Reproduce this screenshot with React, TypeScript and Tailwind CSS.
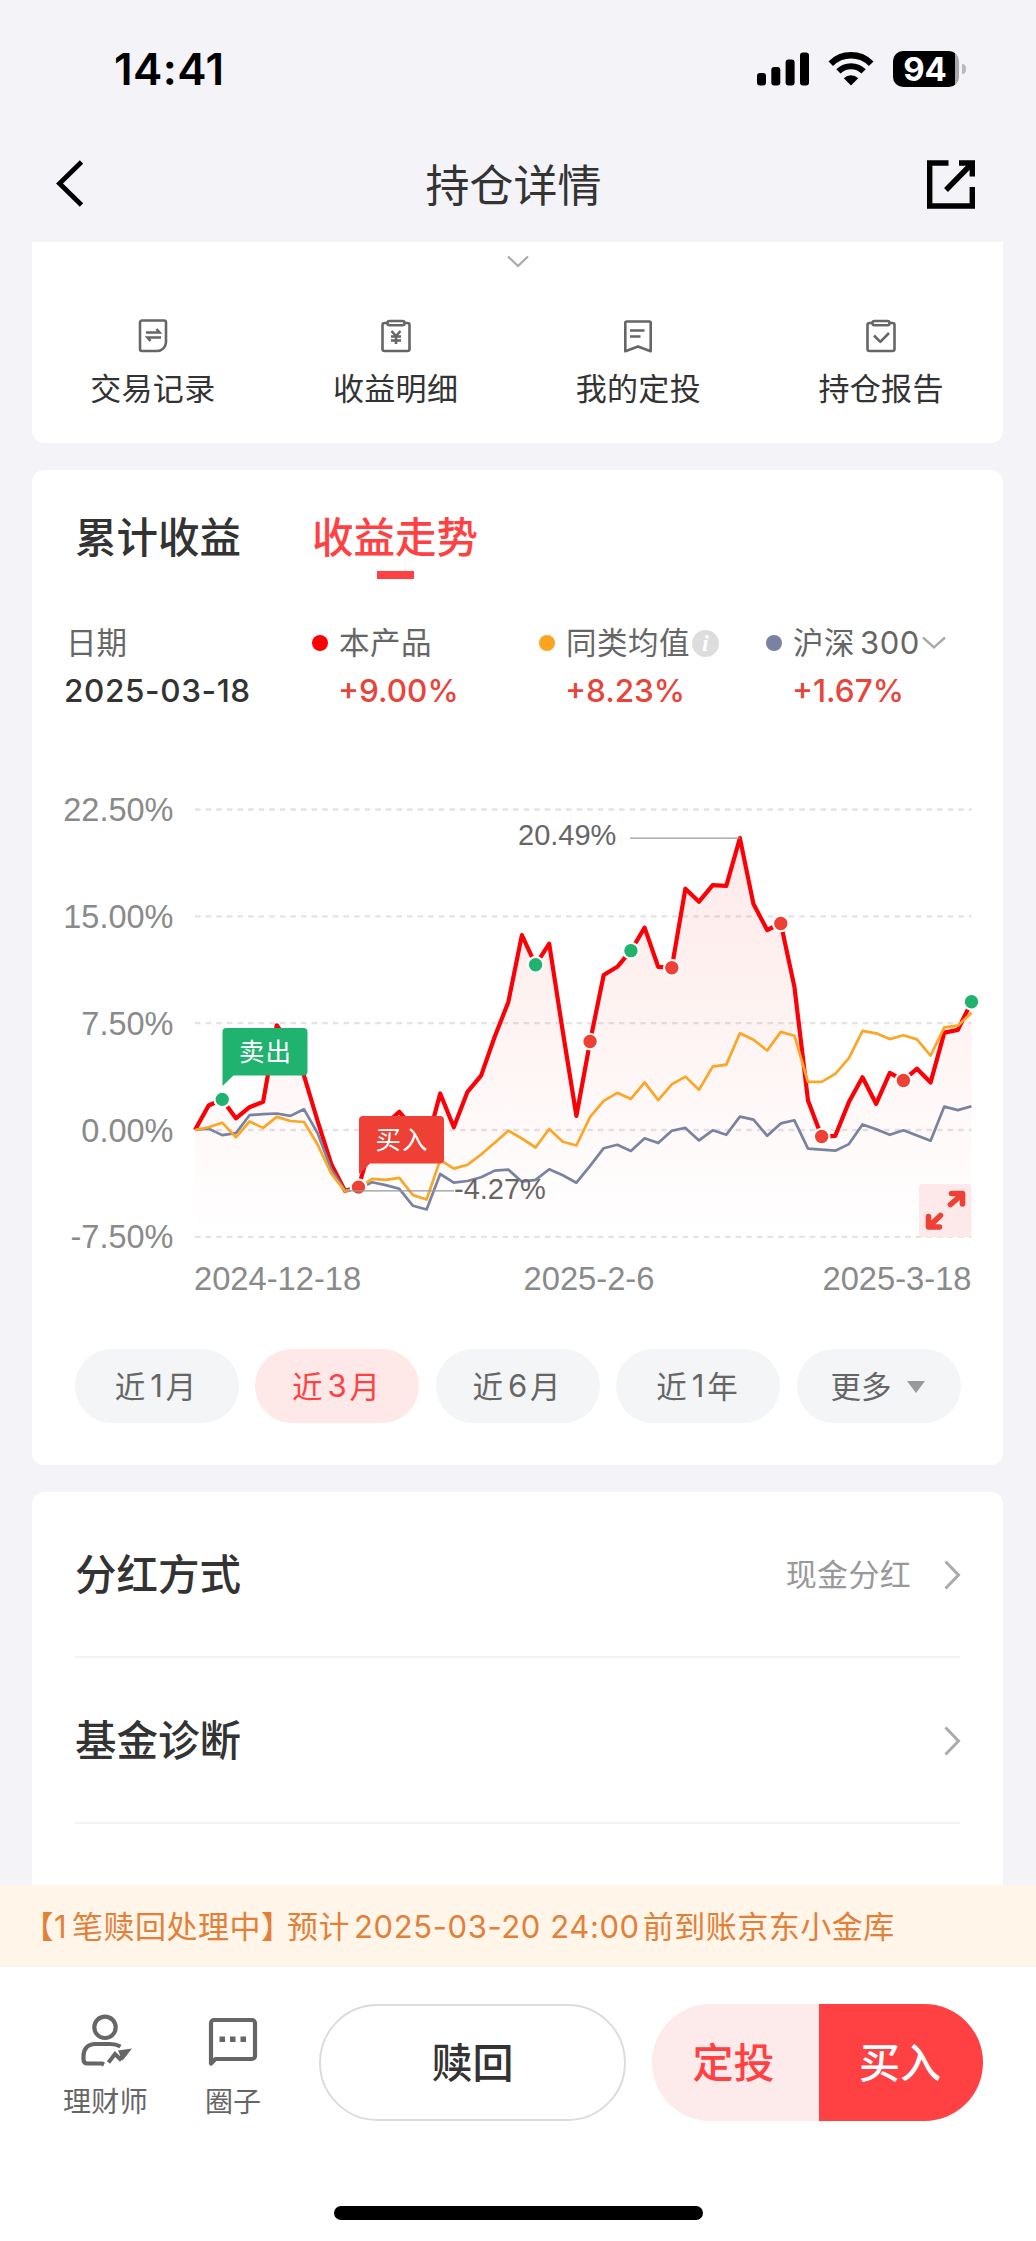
import React from "react";

type Marker = { index: number; kind: "buy" | "sell" };

const product = [
  0, 1.72, 2.15, 0.82, 1.6, 1.98, 7.35, 5.95, 3.82, 0.63, -2.39, -4.27, -4.01, -0.7, 0.39, 1.28, 0.15,
  -1.02, 2.56, 0.19, 2.68, 3.82, 6.55, 8.97, 13.68, 11.6, 13.08, 6.91, 0.99, 6.21, 10.88, 11.46, 12.59,
  14.21, 11.46, 11.39, 16.94, 16.03, 17.19, 17.14, 20.49, 15.86, 14.04, 14.5, 10.06, 2.08, -0.46, -0.41,
  1.96, 3.7, 1.84, 4.01, 3.48, 4.3, 3.34, 6.84, 7.03, 9,
];
const peers = [
  0, 0.19, 0.51, -0.51, 0.6, 0.15, 0.92, 0.63, 0.56, -1.02, -3.05, -4.3, -4.1, -3.43, -3.5, -3.36, -4.57,
  -4.88, -2.1, -2.71, -2.44, -1.72, -0.89, -0.05, -0.6, -1.23, 0.07, -0.82, -1.09, 0.92, 2.05, 2.61, 2.18,
  3.34, 2.1, 3.21, 3.75, 2.83, 4.45, 4.59, 6.79, 6.33, 5.58, 6.89, 6.62, 3.38, 3.38, 3.94, 5.05, 6.96,
  6.79, 6.38, 6.65, 6.36, 5.22, 7.2, 7.32, 8.23,
];
const csi300 = [
  0, 0.1, -0.36, -0.22, 1.04, 1.11, 1.16, 0.99, 1.45, -0.22, -2.76, -4.25, -4.1, -3.67, -3.87, -4.13,
  -5.32, -5.58, -3.09, -3.7, -3.58, -3.31, -2.85, -2.78, -3.63, -3.5, -2.76, -3.17, -3.7, -2.51, -1.28,
  -1.04, -1.47, -0.58, -0.92, -0.05, 0.15, -0.73, -0.02, -0.34, 0.94, 0.73, -0.41, 0.46, 0.68, -1.31,
  -1.38, -1.45, -0.99, 0.39, 0.05, -0.34, -0.02, -0.39, -0.75, 1.64, 1.4, 1.67,
];

const markers: Marker[] = [
  { index: 2, kind: "sell" },
  { index: 12, kind: "buy" },
  { index: 25, kind: "sell" },
  { index: 29, kind: "buy" },
  { index: 32, kind: "sell" },
  { index: 35, kind: "buy" },
  { index: 43, kind: "buy" },
  { index: 46, kind: "buy" },
  { index: 52, kind: "buy" },
  { index: 57, kind: "sell" },
];

const LEFT = 163;
const RIGHT = 939.5;
const ZERO = 360;
const x = (i: number) => LEFT + (i * (RIGHT - LEFT)) / 57;
const y = (v: number) => ZERO - v * 14.245;
const line = (data: number[]) => data.map((v, i) => `${x(i).toFixed(1)},${y(v).toFixed(1)}`).join(" ");

function StatusBar() {
  return (
    <div className="flex h-[138px] items-center justify-between pl-[114px] pr-[70px]">
      <span className="text-[44px] font-semibold leading-none tracking-[0.4px] text-black">14:41</span>
      <div className="flex items-center">
        <svg width="52" height="34" viewBox="0 0 52 34">
          <rect x="0" y="21" width="9" height="12.5" rx="3" />
          <rect x="14.3" y="15" width="9" height="18.5" rx="3" />
          <rect x="28.6" y="7.5" width="9" height="26" rx="3" />
          <rect x="43" y="0.5" width="9" height="33" rx="3" />
        </svg>
        <svg className="ml-[19px]" width="46" height="34" viewBox="0 0 46 34">
          <path d="M2.8 11.7a28.5 28.5 0 0 1 40.4 0" fill="none" stroke="#000" strokeWidth="6.5" />
          <path d="M10.4 19.4a17.8 17.8 0 0 1 25.2 0" fill="none" stroke="#000" strokeWidth="6" />
          <path d="M15.8 26.2a10.2 10.2 0 0 1 14.4 0L23 33.4z" />
        </svg>
        <div className="ml-[19px] flex h-9 w-[66px] items-center justify-center rounded-[10px] bg-[linear-gradient(90deg,#000_94%,#a9a9ad_94%)]">
          <span className="-ml-0.5 text-[33px] font-bold leading-none text-white">94</span>
        </div>
        <div className="ml-[3px] h-2.5 w-1 rounded-r-full bg-[#b9b9be]" />
      </div>
    </div>
  );
}

function NavBar() {
  return (
    <div className="flex h-[104px] items-start justify-between pl-[54px] pr-[61px] pt-[21px]">
      <svg width="48" height="50" viewBox="0 0 48 50">
        <path d="M27.5 3 5.5 24.5 27.5 46" fill="none" stroke="#000" strokeWidth="4.8" />
      </svg>
      <h1 className="-ml-0.5 pt-0.5 text-[44px] leading-[50px] text-[#333]">持仓详情</h1>
      <svg width="48" height="50" viewBox="0 0 48 50" fill="none" stroke="#000" strokeWidth="5.4">
        <path d="M21.5 4H2.7v43h42.6V28" />
        <path d="M32 4h13.3v13.5M44 5.5 19 31" />
      </svg>
    </div>
  );
}

const iconProps = {
  width: 34,
  height: 36,
  viewBox: "0 0 34 36",
  fill: "none",
  stroke: "#666",
  strokeWidth: 2.6,
  strokeLinejoin: "round" as const,
};

const clipboard = (
  <>
    <path d="M8 5H5.5A2 2 0 0 0 3.5 7v24a2 2 0 0 0 2 2h23a2 2 0 0 0 2-2V7a2 2 0 0 0-2-2H26" />
    <rect x="8.5" y="3" width="17" height="4.2" rx="2" />
  </>
);

const shortcuts = [
  {
    label: "交易记录",
    icon: (
      <svg {...iconProps}>
        <path d="M6 2.5h22a2 2 0 0 1 2 2V24a9 9 0 0 1-9 9H6a2 2 0 0 1-2-2V4.5a2 2 0 0 1 2-2z" />
        <path d="M10 14.5h13.5l-3-3.5M25 19.5H11.5l3 3.5" strokeLinejoin="miter" />
      </svg>
    ),
  },
  {
    label: "收益明细",
    icon: (
      <svg {...iconProps}>
        {clipboard}
        <path d="m12.5 13 4.5 5 4.5-5M17 18v8M12 18.5h10M12 22.5h10" />
      </svg>
    ),
  },
  {
    label: "我的定投",
    icon: (
      <svg {...iconProps}>
        <path d="M5.5 3.5h23a1.2 1.2 0 0 1 1.2 1.2v28.5L17 28.5 4.3 33.2V4.7a1.2 1.2 0 0 1 1.2-1.2z" />
        <path d="M9 12.5h14.5M9 18.5h10.5" />
      </svg>
    ),
  },
  {
    label: "持仓报告",
    icon: (
      <svg {...iconProps}>
        {clipboard}
        <path d="m10 17.5 6.3 6.3L25 15" />
      </svg>
    ),
  },
];

function Shortcuts() {
  return (
    <section className="ml-8 mr-[33px] h-[201px] rounded-b-[12px] bg-white">
      <div className="flex h-[76px] justify-center pt-3">
        <svg width="24" height="16" viewBox="0 0 24 16">
          <path d="m2 2.5 10 9.5 10-9.5" fill="none" stroke="#aaa" strokeWidth="2.2" />
        </svg>
      </div>
      <div className="grid grid-cols-4">
        {shortcuts.map((item) => (
          <div key={item.label} className="flex flex-col items-center pr-px">
            {item.icon}
            <span className="mt-[13px] text-[31px] leading-[44px] tracking-[0.3px] text-[#333]">{item.label}</span>
          </div>
        ))}
      </div>
    </section>
  );
}

function Callout({ left, top, color, text }: { left: number; top: number; color: string; text: string }) {
  return (
    <g transform={`translate(${left} ${top})`}>
      <path d="M4 0H81a4 4 0 0 1 4 4V43.5a4 4 0 0 1-4 4H11L0 58V4a4 4 0 0 1 4-4z" fill={color} />
      <text x="43" y="32.5" textAnchor="middle" fontSize="25.5" fill="#fff" letterSpacing="1">
        {text}
      </text>
    </g>
  );
}

function TrendChart() {
  const grid = [22.5, 15, 7.5, 0, -7.5];
  return (
    <svg
      className="block font-['Liberation_Sans','Noto_Sans_CJK_SC',sans-serif]"
      width="971"
      height="540"
      viewBox="0 0 971 540"
    >
      <defs>
        <linearGradient id="area" x1="0" y1="68" x2="0" y2="467" gradientUnits="userSpaceOnUse">
          <stop offset="0" stopColor="#f03c32" stopOpacity="0.11" />
          <stop offset="1" stopColor="#f03c32" stopOpacity="0" />
        </linearGradient>
      </defs>

      {grid.map((v) => (
        <g key={v}>
          <line x1={LEFT} x2={RIGHT} y1={y(v)} y2={y(v)} stroke="#e4e4e4" strokeWidth="2.4" strokeDasharray="5.6 5" />
          <text x="141.5" y={y(v) + 11.5} textAnchor="end" fontSize="32.5" fill="#8a8a8a">
            {v.toFixed(2)}%
          </text>
        </g>
      ))}

      <polygon points={`${LEFT},467 ${line(product)} ${RIGHT},467`} fill="url(#area)" />
      <polyline points={line(product)} fill="none" stroke="#fb0007" strokeWidth="4.2" strokeLinejoin="round" />
      <polyline points={line(csi300)} fill="none" stroke="#7982a0" strokeWidth="2.7" strokeLinejoin="round" />
      <polyline points={line(peers)} fill="none" stroke="#fba626" strokeWidth="2.7" strokeLinejoin="round" />

      {markers.map((m) => (
        <circle
          key={m.index}
          cx={x(m.index)}
          cy={y(product[m.index])}
          r="7.8"
          fill={m.kind === "buy" ? "#ee4035" : "#20b26f"}
          stroke="#fff"
          strokeWidth="2.2"
        />
      ))}

      <line x1="598" x2={x(40)} y1={y(20.49)} y2={y(20.49)} stroke="#999" strokeWidth="1.3" />
      <text x="486" y="75" fontSize="29" fill="#666">
        20.49%
      </text>
      <line x1={x(11)} x2="422" y1={y(-4.27)} y2={y(-4.27)} stroke="#999" strokeWidth="1.3" />
      <text x="422" y="429" fontSize="29" fill="#666">
        -4.27%
      </text>

      <Callout left={190.5} top={258} color="#20b26f" text="卖出" />
      <Callout left={327} top={346} color="#ee4035" text="买入" />

      <rect x="887" y="414" width="52.5" height="53" rx="4" fill="#fde9e9" />
      <g fill="none" stroke="#ee4035" strokeWidth="5.6" strokeLinecap="round" strokeLinejoin="round">
        <path d="M918.5 434.5 930.5 424M919.5 423.5H930.5V434" />
        <path d="M908.5 445.5 897 456.5M896.5 446.5V457H907.5" />
      </g>

      <g fontSize="32.7" fill="#8a8a8a">
        <text x="162" y="520">
          2024-12-18
        </text>
        <text x="557" y="520" textAnchor="middle">
          2025-2-6
        </text>
        <text x="939.5" y="520" textAnchor="end">
          2025-3-18
        </text>
      </g>
    </svg>
  );
}

function LegendItem({ dot, label, value }: { dot: string; label: React.ReactNode; value: string }) {
  return (
    <div className="flex gap-x-[11px]">
      <span className={`mt-4 h-4 w-4 shrink-0 rounded-full ${dot}`} />
      <div>
        <div className="flex items-center tracking-[0.5px]">{label}</div>
        <div className="-ml-px text-[31.5px] font-medium text-[#e8443a]">{value}</div>
      </div>
    </div>
  );
}

function Legend() {
  return (
    <div className="grid grid-cols-[248px_227px_227px_1fr] pl-8 text-[30.5px] leading-[48px] text-[#666]">
      <div>
        <div className="pl-0.5">日期</div>
        <div className="text-[31.5px] font-medium tracking-[0.6px] text-[#333]">2025-03-18</div>
      </div>
      <LegendItem dot="bg-[#fb0007]" label="本产品" value="+9.00%" />
      <LegendItem
        dot="bg-[#fba51f]"
        label={
          <>
            同类均值
            <span className="ml-0.5 flex h-[27px] w-[27px] items-center justify-center rounded-full bg-[#ddd] font-['Liberation_Serif',serif] text-[24px] font-bold italic leading-none text-white">
              i
            </span>
          </>
        }
        value="+8.23%"
      />
      <LegendItem
        dot="bg-[#7982a0]"
        label={
          <>
            沪深<span className="ml-[5px] text-[31px]">300</span>
            <svg className="ml-px" width="26" height="16" viewBox="0 0 26 16">
              <path d="m2 2.5 11 10 11-10" fill="none" stroke="#aaa" strokeWidth="2.4" />
            </svg>
          </>
        }
        value="+1.67%"
      />
    </div>
  );
}

function TrendCard() {
  const ranges = ["近1月", "近3月", "近6月", "近1年"];
  return (
    <section className="ml-8 mr-[33px] mt-[27px] h-[995px] rounded-[12px] bg-white">
      <div className="flex h-[149px] gap-[71px] pl-[43px] pt-[38px] text-[41.5px] font-medium leading-[60px] text-[#333]">
        <span>累计收益</span>
        <div className="flex flex-col items-center text-[#ff4144]">
          <span>收益走势</span>
          <span className="mt-[3px] h-2 w-[37px] bg-[#ff4144]" />
        </div>
      </div>
      <div className="h-[151px]">
        <Legend />
      </div>
      <TrendChart />
      <div className="mt-[39px] flex gap-[16.5px] pl-[42.5px] text-[30.5px] text-[#666]">
        {ranges.map((label) => (
          <div
            key={label}
            className={
              label === "近3月"
                ? "flex h-[74px] w-[164px] items-center justify-center rounded-full bg-[#ffe8e8] pr-0.5 pt-px text-[#ff4144]"
                : "flex h-[74px] w-[164px] items-center justify-center rounded-full bg-[#f3f5f7] pr-0.5 pt-px"
            }
          >
            <span>{label[0]}</span>
            <span className="ml-[5px] mr-[3px] text-[31px]">{label[1]}</span>
            <span>{label[2]}</span>
          </div>
        ))}
        <div className="flex h-[74px] w-[164px] items-center justify-center gap-[15px] rounded-full bg-[#f3f5f7] pr-0.5 pt-px">
          更多
          <svg width="18" height="12" viewBox="0 0 18 12">
            <path d="M0 0h18L9 12z" fill="#999" />
          </svg>
        </div>
      </div>
    </section>
  );
}

function SettingRow({ title, value }: { title: string; value?: string }) {
  return (
    <div className="flex h-[166px] items-center justify-between border-b-2 border-[#f3f3f5] pt-0.5">
      <span className="text-[41.5px] font-medium text-[#333]">{title}</span>
      <div className="-mr-px flex items-center gap-[32px] text-[31px] tracking-[0.3px] text-[#999]">
        {value}
        <svg width="18" height="32" viewBox="0 0 18 32">
          <path d="M2.5 2.5 15.5 16 2.5 29.5" fill="none" stroke="#aaa" strokeWidth="3" />
        </svg>
      </div>
    </div>
  );
}

function ActionBar() {
  return (
    <footer className="flex h-[274px] flex-col items-center bg-white">
      <div className="flex w-full pl-[63px] pt-[37px]">
        <div className="flex w-[85px] flex-col items-center text-[28px] text-[#666]">
          <svg className="mt-[9px]" width="54" height="54" viewBox="0 0 54 54" fill="none" stroke="#666" strokeWidth="4.2">
            <circle cx="26" cy="14.3" r="10.7" />
            <path d="M41.5 33.5C38 31.5 35.5 31 31 31H16.5C8.5 31 4.5 36 4.5 43v3.5c0 2.5 1.5 4 4 4H23l2 1" />
            <path d="m29.5 49.5 6.5-8.5 5 5 6-6" strokeWidth="4" />
            <path d="M39 37.5 53 35.5 43.5 47.5z" fill="#666" stroke="none" />
          </svg>
          <span className="mt-[15px] leading-10 tracking-[0.3px]">理财师</span>
        </div>
        <div className="ml-[43px] flex w-[84px] flex-col items-center text-[28px] text-[#666]">
          <svg className="mt-[9px]" width="54" height="54" viewBox="0 0 54 54">
            <path
              d="M5 50.5V10a3 3 0 0 1 3-3h38a3 3 0 0 1 3 3v33a3 3 0 0 1-3 3H9.5z"
              fill="none"
              stroke="#666"
              strokeWidth="4.2"
              strokeLinejoin="round"
            />
            <path d="M13.5 23.5H19V29h-5.500zM24 23.500h5.500V29H24zM34.500 23.500H40V29h-5.500z" fill="#666" />
          </svg>
          <span className="mt-[15px] leading-10">圈子</span>
        </div>
        <button className="ml-[44px] h-[117px] w-[307px] rounded-full border-2 border-[#dcdcdc] pt-0.5 text-[41px] font-medium text-[#333]">
          赎回
        </button>
        <div className="ml-[26px] flex h-[117px] overflow-hidden rounded-full text-[41px] font-medium">
          <button className="w-[167px] bg-[#fdeaea] pr-1 pt-0.5 text-[#ff4144]">定投</button>
          <button className="w-[164px] bg-[#ff4144] pr-0.5 pt-0.5 text-white">买入</button>
        </div>
      </div>
      <div className="mt-[84px] h-[14px] w-[369px] rounded-full bg-black" />
    </footer>
  );
}

export default function App() {
  return (
    <div className="flex h-[2241px] w-[1036px] flex-col overflow-hidden bg-[#f3f3f8] font-['Inter','Noto_Sans_CJK_SC',sans-serif]">
      <StatusBar />
      <NavBar />
      <Shortcuts />
      <TrendCard />
      <section className="ml-8 mr-[33px] mt-[27px] h-[393px] overflow-hidden rounded-t-[12px] bg-white px-[43px]">
        <SettingRow title="分红方式" value="现金分红" />
        <SettingRow title="基金诊断" />
      </section>
      <div className="flex h-[82px] items-center whitespace-nowrap bg-[#fff5e8] pl-[38px] pt-0.5 text-[31px] tracking-[0.5px] text-[#e2803a] [font-feature-settings:'halt']">
        <span>【</span>
        <span>1</span>
        <span className="ml-[5px]">笔赎回处理中】</span>
        <span className="ml-[10px]">预计</span>
        <span className="ml-[4px] tracking-[0.6px]">2025-03-20 24:00</span>
        <span className="ml-[3px]">前到账京东小金库</span>
      </div>
      <ActionBar />
    </div>
  );
}
